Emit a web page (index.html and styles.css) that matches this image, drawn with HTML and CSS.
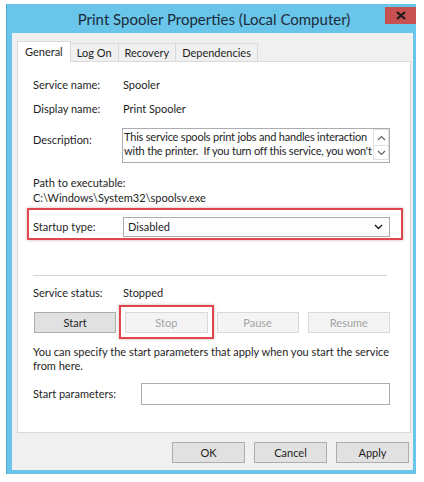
FILE: index.html
```html
<!DOCTYPE html>
<html>
<head>
<meta charset="utf-8">
<link rel="stylesheet" href="styles.css">
</head>
<body>
<div class="window">
  <div class="titlebar">
    <span class="title">Print Spooler Properties (Local Computer)</span>
    <span class="close"><svg width="10" height="9" viewBox="0 0 10 9"><path d="M1 1 L9 8 M9 1 L1 8" stroke="#1b1b1b" stroke-width="2.2" fill="none"/></svg></span>
  </div>
  <div class="client">
    <div class="tabs">
      <div class="tab active">General</div>
      <div class="tab">Log On</div>
      <div class="tab">Recovery</div>
      <div class="tab">Dependencies</div>
    </div>
    <div class="panel">
      <div class="row r-name"><span class="label">Service name:</span><span>Spooler</span></div>
      <div class="row r-display"><span class="label">Display name:</span><span>Print Spooler</span></div>
      <div class="row r-desc">
        <span class="label desc-label">Description:</span>
        <div class="textarea">
          <div class="ta-text">This service spools print jobs and handles interaction<br>with the printer.&nbsp; If you turn off this service, you won't</div>
          <div class="scroll">
            <span class="sbtn up"><svg width="9" height="6" viewBox="0 0 9 6"><path d="M1 5 L4.5 1.5 L8 5" stroke="#606060" stroke-width="1.2" fill="none"/></svg></span>
            <span class="sbtn down"><svg width="9" height="6" viewBox="0 0 9 6"><path d="M1 1 L4.5 4.5 L8 1" stroke="#606060" stroke-width="1.2" fill="none"/></svg></span>
          </div>
        </div>
      </div>
      <div class="path-label">Path to executable:</div>
      <div class="path-value">C:\Windows\System32\spoolsv.exe</div>
      <div class="row r-startup highlight-row">
        <span class="label">Startup type:</span>
        <div class="select"><span>Disabled</span><svg width="9" height="6" viewBox="0 0 9 6"><path d="M1 1 L4.5 4.5 L8 1" stroke="#202020" stroke-width="1.4" fill="none"/></svg></div>
      </div>
      <div class="separator"></div>
      <div class="row r-status"><span class="label">Service status:</span><span>Stopped</span></div>
      <div class="svc-buttons">
        <span class="btn">Start</span>
        <span class="btn disabled highlight-btn">Stop</span>
        <span class="btn disabled">Pause</span>
        <span class="btn disabled">Resume</span>
      </div>
      <p class="hint">You can specify the start parameters that apply when you start the service from here.</p>
      <div class="row r-params"><span class="label params-label">Start parameters:</span><span class="input"></span></div>
    </div>
    <div class="footer">
      <span class="btn fbtn">OK</span>
      <span class="btn fbtn">Cancel</span>
      <span class="btn fbtn">Apply</span>
    </div>
  </div>
</div>
</body>
</html>
```

FILE: styles.css
```css
* { box-sizing: border-box; }
html, body { margin: 0; padding: 0; background: #ffffff; }
body {
  width: 424px;
  height: 482px;
  overflow: hidden;
  font-family: "Lato", "Liberation Sans", sans-serif;
  font-size: 11px;
  color: #1e1e1e;
  padding: 4px 0 0 6px;
}
.window {
  width: 410px;
  height: 470px;
  background: #69c5ea;
  border-left: 1px solid #4ea6cf;
  padding: 0 3px 4px 5px;
  display: flex;
  flex-direction: column;
}
.titlebar {
  height: 29px;
  position: relative;
  display: flex;
  align-items: center;
  justify-content: center;
  padding-top: 1px;
}
.title {
  font-size: 15px;
  color: #1d2c3a;
  margin-left: 3px;
}
.close {
  position: absolute;
  right: -3px;
  top: 3px;
  width: 31px;
  height: 17px;
  background: #c75050;
  display: flex;
  align-items: center;
  justify-content: center;
}
.client {
  flex: 1;
  background: #f0f0f0;
  padding: 8px 2px 0 5px;
  display: flex;
  flex-direction: column;
}
.tabs {
  display: flex;
  align-items: flex-end;
  height: 20px;
  position: relative;
  z-index: 1;
}
.tab {
  height: 18px;
  padding: 0 6px;
  border: 1px solid #d9d9d9;
  border-bottom: none;
  background: #f0f0f0;
  display: flex;
  align-items: center;
  margin-left: -1px;
}
.tab.active {
  height: 21px;
  margin-bottom: -1px;
  margin-left: 0;
  padding: 0 7px 2px 7px;
  background: #ffffff;
}
.panel {
  height: 372px;
  background: #ffffff;
  border: 1px solid #d9d9d9;
  padding: 15px 20px 0 15px;
  display: flex;
  flex-direction: column;
}
.row {
  display: flex;
  align-items: center;
  line-height: 16px;
}
.label {
  width: 90px;
  flex: none;
}
.r-display { margin-top: 8px; }
.r-desc { margin-top: 11px; align-items: flex-start; }
.desc-label { padding-top: 4px; margin-right: -1px; }
.textarea {
  width: 268px;
  height: 35px;
  border: 1px solid #abadb3;
  display: flex;
  overflow: hidden;
}
.ta-text {
  flex: 1;
  white-space: nowrap;
  overflow: hidden;
  line-height: 14px;
  letter-spacing: -0.2px;
  padding: 1px 0 0 1px;
}
.scroll {
  width: 16px;
  display: flex;
  flex-direction: column;
  background: #ffffff;
}
.sbtn {
  display: flex;
  align-items: center;
  justify-content: center;
  border: 1px solid #e0e0e0;
  background: #ffffff;
}
.sbtn.up { height: 17px; }
.sbtn.down { height: 15px; margin-top: -1px; }
.path-label { margin-top: 12px; line-height: 15px; }
.path-value { line-height: 15px; }
.r-startup { margin-top: 12px; }
.highlight-row, .highlight-btn { position: relative; }
.highlight-row::after {
  content: "";
  position: absolute;
  left: -6px;
  right: -13px;
  top: -9px;
  bottom: -3px;
  border: 2px solid #e0464e;
  box-shadow: 0 0 3px rgba(120, 40, 40, 0.35);
}
.select {
  width: 267px;
  height: 20px;
  border: 1px solid #acacac;
  background: #fdfdfd;
  display: flex;
  align-items: center;
  justify-content: space-between;
  padding: 0 6px 0 4px;
}
.separator {
  margin-top: 38px;
  margin-right: 3px;
  height: 1px;
  background: #d4d4d4;
}
.r-status { margin-top: 9px; }
.svc-buttons {
  margin-top: 11px;
  margin-left: 1px;
  display: grid;
  grid-template-columns: repeat(4, 1fr);
  gap: 9px;
}
.btn {
  height: 21px;
  display: flex;
  align-items: center;
  justify-content: center;
  background: #e1e1e1;
  border: 1px solid #adadad;
}
.btn.disabled {
  background: #f4f4f4;
  border-color: #d9d9d9;
  color: #a3a3a3;
}
.highlight-btn::after {
  content: "";
  position: absolute;
  left: -7px;
  right: -7px;
  top: -8px;
  bottom: -7px;
  border: 2px solid #e0464e;
  box-shadow: 0 0 3px rgba(120, 40, 40, 0.35);
}
.hint {
  margin: 12px 0 0 0;
  line-height: 14px;
}
.r-params { margin-top: 10px; }
.params-label { width: 108px; }
.input {
  flex: 1;
  height: 22px;
  border: 1px solid #abadb3;
  background: #ffffff;
}
.footer {
  display: flex;
  justify-content: flex-end;
  gap: 9px;
  padding: 9px 2px 0 0;
}
.fbtn { width: 73px; }
```
